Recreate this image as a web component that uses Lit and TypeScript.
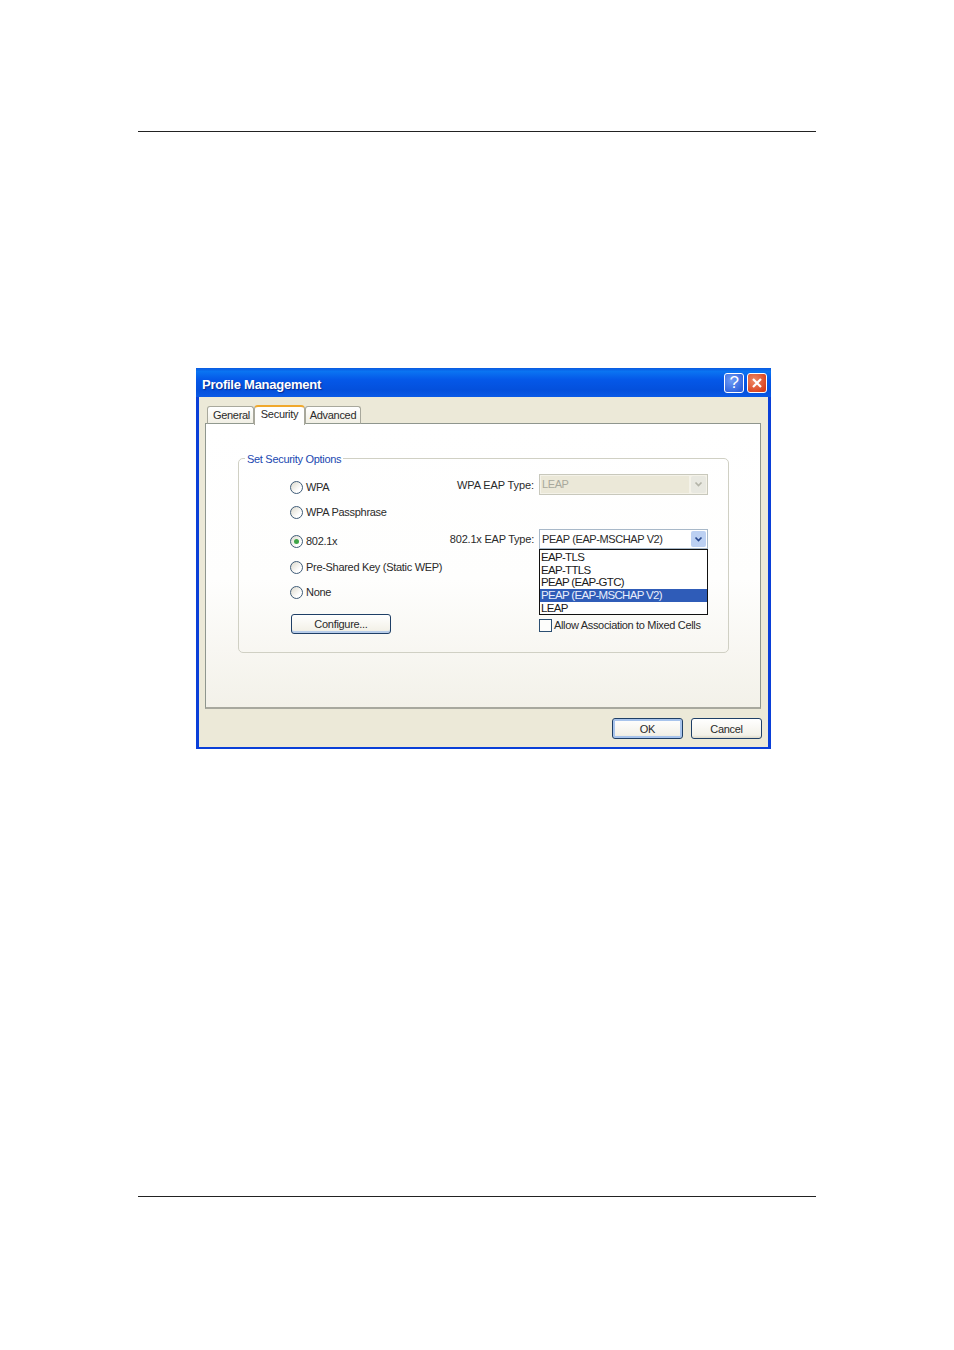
import { LitElement, html, css } from "lit";
import { customElement } from "lit/decorators.js";

@customElement("app-root")
export class AppRoot extends LitElement {
  static styles = css`
    :host { display: block; width: 954px; height: 1350px; background: #fff; font-family: "Liberation Sans", Arial, sans-serif; font-size: 11px; letter-spacing: -0.3px; color: #2a2a2a; overflow: hidden; }
    .page { display: flex; flex-direction: column; padding: 131px 138px 0; box-sizing: border-box; height: 1350px; }
    .rule { height: 1px; background: #222; width: 678px; flex: none; }
    .dialog { flex: none; box-sizing: border-box; width: 575px; height: 381px; margin: 236px 0 447px 58px; display: flex; flex-direction: column; background: #0a3fd8; border-radius: 2px 2px 0 0; white-space: nowrap; }
    .title { flex: none; height: 29px; box-sizing: border-box; display: flex; align-items: center; padding: 0 4px 0 6px; background: linear-gradient(180deg, #0a5ae0 0%, #0a74f2 12%, #0558e8 40%, #0450dc 75%, #0a5ae6 100%); }
    .title-text { flex: 1; color: #fff; font-weight: bold; font-size: 13px; letter-spacing: -0.25px; text-shadow: 1px 1px 1px #0a2a90; padding-top: 3px; }
    .cap { width: 20px; height: 20px; box-sizing: border-box; border: 1px solid #fff; border-radius: 3px; margin-left: 3px; display: flex; align-items: center; justify-content: center; }
    .help { background: radial-gradient(circle at 35% 35%, #6f9cf5, #2f62dc 80%); color: #fff; font-size: 17px; }
    .close { background: radial-gradient(circle at 35% 35%, #ef8a66, #d8401c 80%); }
    .body { flex: 1; margin: 0 3px 2px 3px; background: #ece9d8; display: flex; flex-direction: column; padding: 7px 7px 7px 6px; box-sizing: border-box; }
    .tabs { flex: none; display: flex; align-items: flex-end; height: 20px; padding-left: 2px; margin-bottom: -1px; position: relative; z-index: 1; }
    .tab { box-sizing: border-box; height: 18px; display: flex; align-items: center; justify-content: center; border: 1px solid #a8a89c; border-bottom: 1px solid #91998f; border-radius: 3px 3px 0 0; background: linear-gradient(180deg, #fff, #f1efe4); }
    .tab.g { width: 47px; padding-left: 2px; }
    .tab.a { width: 56px; }
    .tab.s { width: 51px; height: 20px; margin-bottom: -1px; background: #fff; border: 1px solid #a8a89c; border-top: 2px solid #f0a82c; border-bottom: none; padding-bottom: 5px; border-radius: 4px 4px 0 0; }
    .panel { flex: none; box-sizing: border-box; height: 286px; border: 1px solid #8f968e; border-bottom: 2px solid #a8a89e; background: linear-gradient(180deg, #fff 0%, #fefefd 55%, #f3f1e9 100%); padding: 34px 31px 0 32px; }
    .group { position: relative; box-sizing: border-box; height: 195px; border: 1px solid #d0d0c4; border-radius: 5px; display: flex; justify-content: space-between; padding: 15px 20px 0 51px; }
    .legend { position: absolute; left: 6px; top: -6px; padding: 0 2px; background: #fff; color: #1a48b0; line-height: 13px; }
    .left { display: flex; flex-direction: column; align-items: flex-start; padding-top: 6px; }
    .radio { display: flex; align-items: center; height: 14px; gap: 3px; }
    .r2 { margin-top: 11px; } .r3 { margin-top: 15px; } .r4 { margin-top: 12px; } .r5 { margin-top: 11px; }
    .dot { width: 13px; height: 13px; box-sizing: border-box; border-radius: 50%; border: 1px solid #3f5c78; background: linear-gradient(135deg, #dcd9cc, #fff 70%); display: flex; align-items: center; justify-content: center; flex: none; }
    .dot i { width: 5px; height: 5px; border-radius: 50%; background: #3fa548; }
    .btn { box-sizing: border-box; display: flex; align-items: center; justify-content: center; border: 1px solid #1f3f66; border-radius: 3px; background: linear-gradient(180deg, #fff, #f3f1e8 85%, #dcd8c8); }
    .configure { width: 100px; height: 20px; margin: 15px 0 0 1px; box-shadow: inset 0 -2px 0 #b8cdea; }
    .right { width: 258px; flex: none; display: flex; flex-direction: column; }
    .field { display: flex; align-items: center; justify-content: flex-end; gap: 5px; letter-spacing: -0.1px; }
    .f2 { margin-top: 34px; height: 20px; letter-spacing: -0.22px; }
    .combo { box-sizing: border-box; flex: none; width: 169px; height: 21px; display: flex; align-items: center; border: 1px solid #a8b8c8; background: #fff; padding: 1px 1px 1px 2px; letter-spacing: -0.4px; }
    .f2 .combo { height: 20px; letter-spacing: -0.4px; }
    .combo span { flex: 1; }
    .combo.off { background: #f4f2e8; border-color: #c8c8bc; color: #a8a89c; padding: 1px; }
    .combo.off span { background: #ebe8d8; height: 17px; line-height: 17px; padding-left: 1px; }
    .arrow { width: 15px; height: 16px; box-sizing: border-box; display: flex; align-items: center; justify-content: center; background: #bcd0f2; border-radius: 2px; }
    .off .arrow { background: #e8e8e0; margin-left: 2px; height: 17px; }
    .list { box-sizing: border-box; width: 169px; height: 66px; margin-left: 89px; border: 1px solid #111; background: #fff; padding-top: 1px; color: #1a1a1a; font-size: 11.5px; letter-spacing: -0.68px; }
    .item { height: 12.7px; line-height: 12.7px; padding-left: 1px; }
    .item.on { background: #2f5cb8; color: #e8eefc; }
    .check { display: flex; align-items: center; gap: 2px; margin: 4px 0 0 89px; height: 13px; letter-spacing: -0.33px; }
    .check b { font-weight: normal; margin-bottom: 1px; }
    .box { width: 13px; height: 13px; box-sizing: border-box; border: 1px solid #2c4f72; background: #fdfdfb; flex: none; }
    .foot { flex: 1; display: flex; justify-content: flex-end; gap: 8px; padding-top: 9px; margin-right: -1px; }
    .foot .btn { width: 71px; height: 21px; }
    .ok { box-shadow: inset 0 0 0 2px #a8c4ec; }
  `;

  private chevron(color: string) {
    return html`<svg width="9" height="7" viewBox="0 0 9 7"><path d="M1.5 1.5 L4.5 4.5 L7.5 1.5" fill="none" stroke=${color} stroke-width="1.7"/></svg>`;
  }

  private radio(label: string, cls: string, on = false) {
    return html`<div class="radio ${cls}"><span class="dot">${on ? html`<i></i>` : ""}</span>${label}</div>`;
  }

  render() {
    return html`<div class="page">
      <div class="rule"></div>
      <div class="dialog">
        <div class="title">
          <div class="title-text">Profile Management</div>
          <div class="cap help">?</div>
          <div class="cap close"><svg width="12" height="12" viewBox="0 0 12 12"><path d="M2 2 L10 10 M10 2 L2 10" stroke="#fff" stroke-width="2.2"/></svg></div>
        </div>
        <div class="body">
          <div class="tabs">
            <div class="tab g">General</div>
            <div class="tab s">Security</div>
            <div class="tab a">Advanced</div>
          </div>
          <div class="panel">
            <div class="group">
              <div class="legend">Set Security Options</div>
              <div class="left">
                ${this.radio("WPA", "r1")}
                ${this.radio("WPA Passphrase", "r2")}
                ${this.radio("802.1x", "r3", true)}
                ${this.radio("Pre-Shared Key (Static WEP)", "r4")}
                ${this.radio("None", "r5")}
                <div class="btn configure">Configure...</div>
              </div>
              <div class="right">
                <div class="field">WPA EAP Type:
                  <div class="combo off"><span>LEAP</span><div class="arrow">${this.chevron("#b4b4a8")}</div></div>
                </div>
                <div class="field f2">802.1x EAP Type:
                  <div class="combo"><span>PEAP (EAP-MSCHAP V2)</span><div class="arrow">${this.chevron("#2a4a90")}</div></div>
                </div>
                <div class="list">
                  <div class="item">EAP-TLS</div>
                  <div class="item">EAP-TTLS</div>
                  <div class="item">PEAP (EAP-GTC)</div>
                  <div class="item on">PEAP (EAP-MSCHAP V2)</div>
                  <div class="item">LEAP</div>
                </div>
                <div class="check"><span class="box"></span><b>Allow Association to Mixed Cells</b></div>
              </div>
            </div>
          </div>
          <div class="foot">
            <div class="btn ok">OK</div>
            <div class="btn">Cancel</div>
          </div>
        </div>
      </div>
      <div class="rule"></div>
    </div>`;
  }
}
